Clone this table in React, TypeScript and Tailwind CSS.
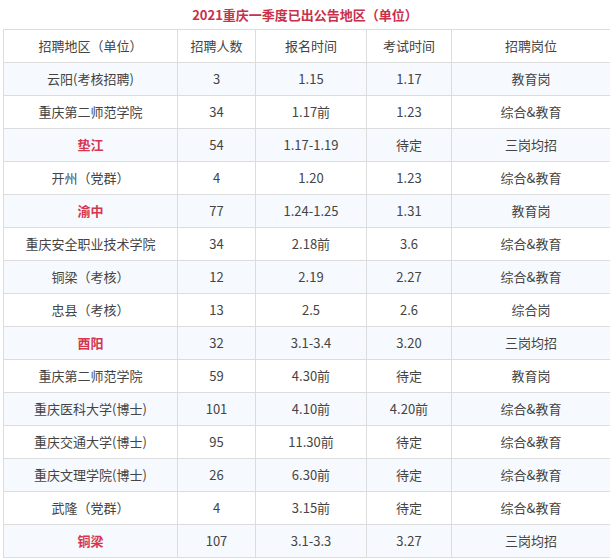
const rows: [string, string, string, string, string, boolean][] = [
  ["云阳(考核招聘)", "3", "1.15", "1.17", "教育岗", false],
  ["重庆第二师范学院", "34", "1.17前", "1.23", "综合&教育", false],
  ["垫江", "54", "1.17-1.19", "待定", "三岗均招", true],
  ["开州（党群）", "4", "1.20", "1.23", "综合&教育", false],
  ["渝中", "77", "1.24-1.25", "1.31", "教育岗", true],
  ["重庆安全职业技术学院", "34", "2.18前", "3.6", "综合&教育", false],
  ["铜梁（考核）", "12", "2.19", "2.27", "综合&教育", false],
  ["忠县（考核）", "13", "2.5", "2.6", "综合岗", false],
  ["酉阳", "32", "3.1-3.4", "3.20", "三岗均招", true],
  ["重庆第二师范学院", "59", "4.30前", "待定", "教育岗", false],
  ["重庆医科大学(博士)", "101", "4.10前", "4.20前", "综合&教育", false],
  ["重庆交通大学(博士)", "95", "11.30前", "待定", "综合&教育", false],
  ["重庆文理学院(博士)", "26", "6.30前", "待定", "综合&教育", false],
  ["武隆（党群）", "4", "3.15前", "待定", "综合&教育", false],
  ["铜梁", "107", "3.1-3.3", "3.27", "三岗均招", true],
]

const headers = ["招聘地区（单位）", "招聘人数", "报名时间", "考试时间", "招聘岗位"]
const widths = ["w-[174px]", "w-[78px]", "w-[111px]", "w-[85px]", "w-[159px]"]

export default function App() {
  return (
    <div
      className="w-[610px] h-[558px] overflow-hidden bg-white pl-[3px]"
      style={{ fontFamily: '"Microsoft YaHei", "Noto Sans CJK SC", sans-serif' }}
    >
      {/* Title */}
      <div className="h-[29px] flex items-center justify-center text-[13px] font-bold text-[#c9304a] pr-[3px]">
        2021重庆一季度已出公告地区（单位）
      </div>

      <table className="border-collapse table-fixed w-[608px] text-[13px] text-[#444]">
        <thead>
          <tr className="h-[33px] bg-white">
            {headers.map((h, i) => (
              <th key={h} className={`${widths[i]} border border-[#dcdcdc] font-normal text-center`}>
                {h}
              </th>
            ))}
          </tr>
        </thead>
        <tbody>
          {rows.map((r, idx) => (
            <tr key={idx} className={`h-[33px] ${idx % 2 === 0 ? "bg-[#f6f9fd]" : "bg-white"}`}>
              <td className={`border border-[#dcdcdc] text-center ${r[5] ? "text-[#d6364f] font-bold" : ""}`}>
                {r[0]}
              </td>
              <td className="border border-[#dcdcdc] text-center">{r[1]}</td>
              <td className="border border-[#dcdcdc] text-center">{r[2]}</td>
              <td className="border border-[#dcdcdc] text-center">{r[3]}</td>
              <td className="border border-[#dcdcdc] text-center">{r[4]}</td>
            </tr>
          ))}
        </tbody>
      </table>
    </div>
  )
}
